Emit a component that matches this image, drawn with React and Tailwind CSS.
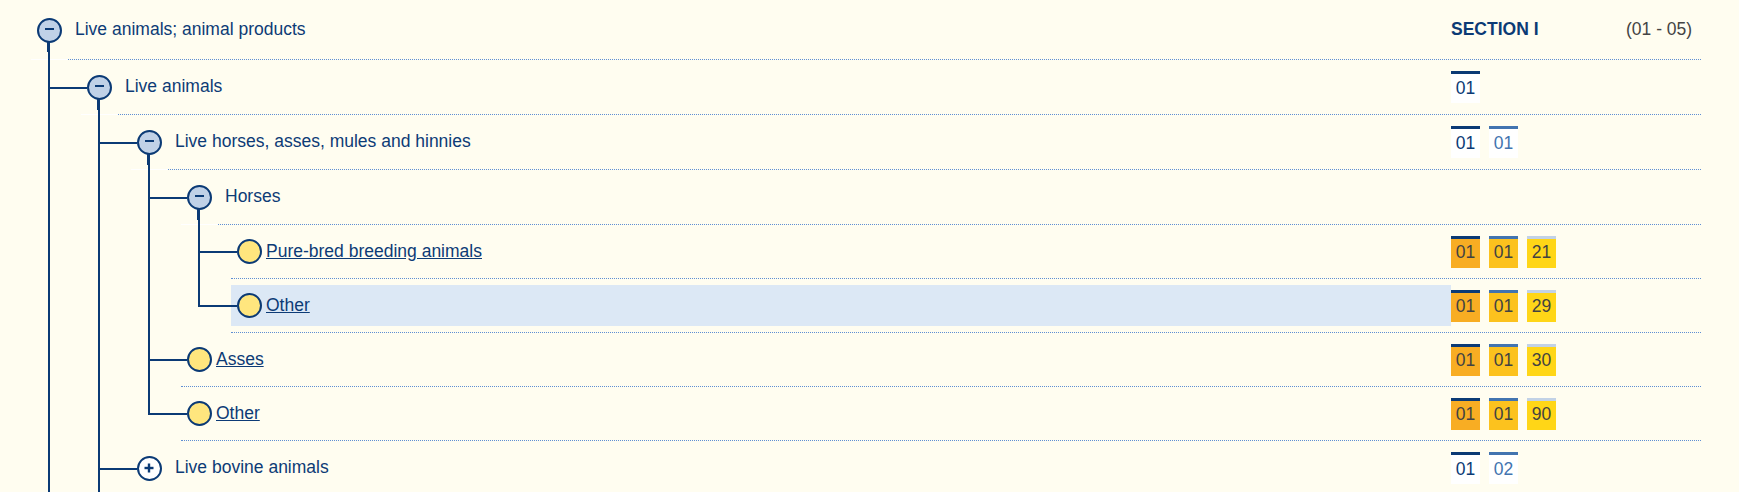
import React from "react";

// tree rows: d = depth, guides = connector type for each ancestor column
const rows = [
    { d: 0, kind: "node", open: true, label: "Live animals; animal products", h: "h-[60px]", guides: [], section: true },
    { d: 1, kind: "node", open: true, label: "Live animals", h: "h-[55px]", guides: ["tee"], codes: ["w1"] },
    { d: 2, kind: "node", open: true, label: "Live horses, asses, mules and hinnies", h: "h-[55px]", guides: ["line", "tee"], codes: ["w1", "w2"] },
    { d: 3, kind: "node", open: true, label: "Horses", h: "h-[55px]", guides: ["line", "line", "tee"], codes: [] },
    { d: 4, kind: "leaf", label: "Pure-bred breeding animals", h: "h-[54px]", guides: ["line", "line", "line", "tee"], codes: ["o1", "o2", "o3"], nums: ["01", "01", "21"] },
    { d: 4, kind: "leaf", label: "Other", selected: true, h: "h-[54px]", guides: ["line", "line", "line", "end"], codes: ["o1", "o2", "o3"], nums: ["01", "01", "29"] },
    { d: 3, kind: "leaf", label: "Asses", h: "h-[54px]", guides: ["line", "line", "tee"], codes: ["o1", "o2", "o3"], nums: ["01", "01", "30"] },
    { d: 3, kind: "leaf", label: "Other", h: "h-[54px]", guides: ["line", "line", "end"], codes: ["o1", "o2", "o3"], nums: ["01", "01", "90"] },
    { d: 2, kind: "node", open: false, label: "Live bovine animals", h: "h-[55px]", guides: ["line", "tee"], codes: ["w1", "w3"] },
];

const codeStyles = {
    w1: { bar: "bg-[#0b3a75]", body: "bg-white text-[#0b3a75]", num: "01" },
    w2: { bar: "bg-[#4274b0]", body: "bg-white text-[#4274b0]", num: "01" },
    w3: { bar: "bg-[#4274b0]", body: "bg-white text-[#4274b0]", num: "02" },
    o1: { bar: "bg-[#0b3a75]", body: "bg-[#f8ad23] text-[#424242]" },
    o2: { bar: "bg-[#4274b0]", body: "bg-[#fcc21e] text-[#424242]" },
    o3: { bar: "bg-[#c2d2e6]", body: "bg-[#ffd617] text-[#424242]" },
};

function Guide({ type }) {
    return (
        <div className="relative w-[50px] shrink-0 self-stretch">
            {(type === "line" || type === "tee") && (
                <div className="absolute left-[24px] top-0 bottom-0 w-[2px] bg-[#0b3a75]" />
            )}
            {type === "end" && (
                <div className="absolute left-[24px] top-0 h-[calc(50%+1px)] w-[2px] bg-[#0b3a75]" />
            )}
            {(type === "tee" || type === "end") && (
                <div className="absolute z-10 left-[24px] top-1/2 -mt-px h-[2px] w-[39px] bg-[#0b3a75]" />
            )}
        </div>
    );
}

function Codes({ row }) {
    return (
        <div className="w-[250px] shrink-0 flex items-center">
            {row.codes &&
                row.codes.map((c, i) => {
                    const s = codeStyles[c];
                    return (
                        <div key={i} className="flex flex-col w-[29px] mr-[9px]">
                            <div className={"h-[3px] " + s.bar} />
                            <div className={"h-[29px] flex items-center justify-center " + s.body}>
                                {s.num || row.nums[i]}
                            </div>
                        </div>
                    );
                })}
        </div>
    );
}

function NodeRow({ row }) {
    return (
        <div className={"flex " + row.h}>
            {row.guides.map((g, i) => (
                <Guide key={i} type={g} />
            ))}
            <div className="relative w-[50px] shrink-0 self-stretch flex items-center justify-center">
                <div className="absolute bottom-0 left-[7px] w-[37px] h-px bg-white" />
                {row.open && (
                    <>
                        <div className="absolute left-[24px] top-1/2 bottom-0 w-[2px] bg-[#0b3a75]" />
                        <div className="absolute left-[23px] top-1/2 mt-[10px] h-[12px] w-[3px] bg-[#0b3a75]" />
                    </>
                )}
                {row.open ? (
                    <div className="relative z-10 w-[25px] h-[25px] rounded-full border-2 border-[#0b3a75] bg-[#c0d1e7] flex items-center justify-center">
                        <div className="w-[9px] h-[2px] -mt-[3px] bg-[#0b3a75]" />
                    </div>
                ) : (
                    <div className="relative z-10 w-[25px] h-[25px] rounded-full border-2 border-[#0b3a75] bg-white flex items-center justify-center">
                        <svg width="10" height="10" viewBox="0 0 10 10" className="-mt-px">
                            <rect x="0.5" y="3.8" width="9" height="2.4" fill="#0b3a75" />
                            <rect x="3.8" y="0.5" width="2.4" height="9" fill="#0b3a75" />
                        </svg>
                    </div>
                )}
            </div>
            <div className="flex-1 flex items-center -ml-[6px] pl-[7px] border-b border-dotted border-[#5f8fd3]">
                <span className="flex-1 text-[#0d3b76]">{row.label}</span>
                {row.section ? (
                    <div className="w-[250px] shrink-0 flex items-center">
                        <span className="w-[175px] font-bold text-[#0b3a75]">SECTION I</span>
                        <span className="text-[#444444]">(01 - 05)</span>
                    </div>
                ) : (
                    <Codes row={row} />
                )}
            </div>
        </div>
    );
}

function LeafRow({ row }) {
    return (
        <div className={"flex " + row.h}>
            {row.guides.map((g, i) => (
                <Guide key={i} type={g} />
            ))}
            <div className="flex-1 flex ml-[7px] border-b border-dotted border-[#5f8fd3]">
                <div className={"flex-1 flex items-center my-[6px] " + (row.selected ? "bg-[#dce8f5]" : "")}>
                    <div className="relative z-20 ml-[6px] w-[25px] h-[25px] rounded-full border-2 border-[#0b3a75] bg-[#ffe67e]" />
                    <a href="#" className="ml-[4px] underline text-[#0d3b76]">
                        {row.label}
                    </a>
                </div>
                <Codes row={row} />
            </div>
        </div>
    );
}

export default function App() {
    return (
        <div className="h-[492px] w-full overflow-hidden bg-[#fffdf0] pl-[24px] pr-[38px] font-['Liberation_Sans',Arial,sans-serif] text-[17.5px] leading-none">
            {rows.map((row, i) =>
                row.kind === "node" ? <NodeRow key={i} row={row} /> : <LeafRow key={i} row={row} />
            )}
            {/* next sibling rows continue below the fold */}
            <div className="flex h-[55px]">
                <Guide type="line" />
                <Guide type="line" />
            </div>
        </div>
    );
}
